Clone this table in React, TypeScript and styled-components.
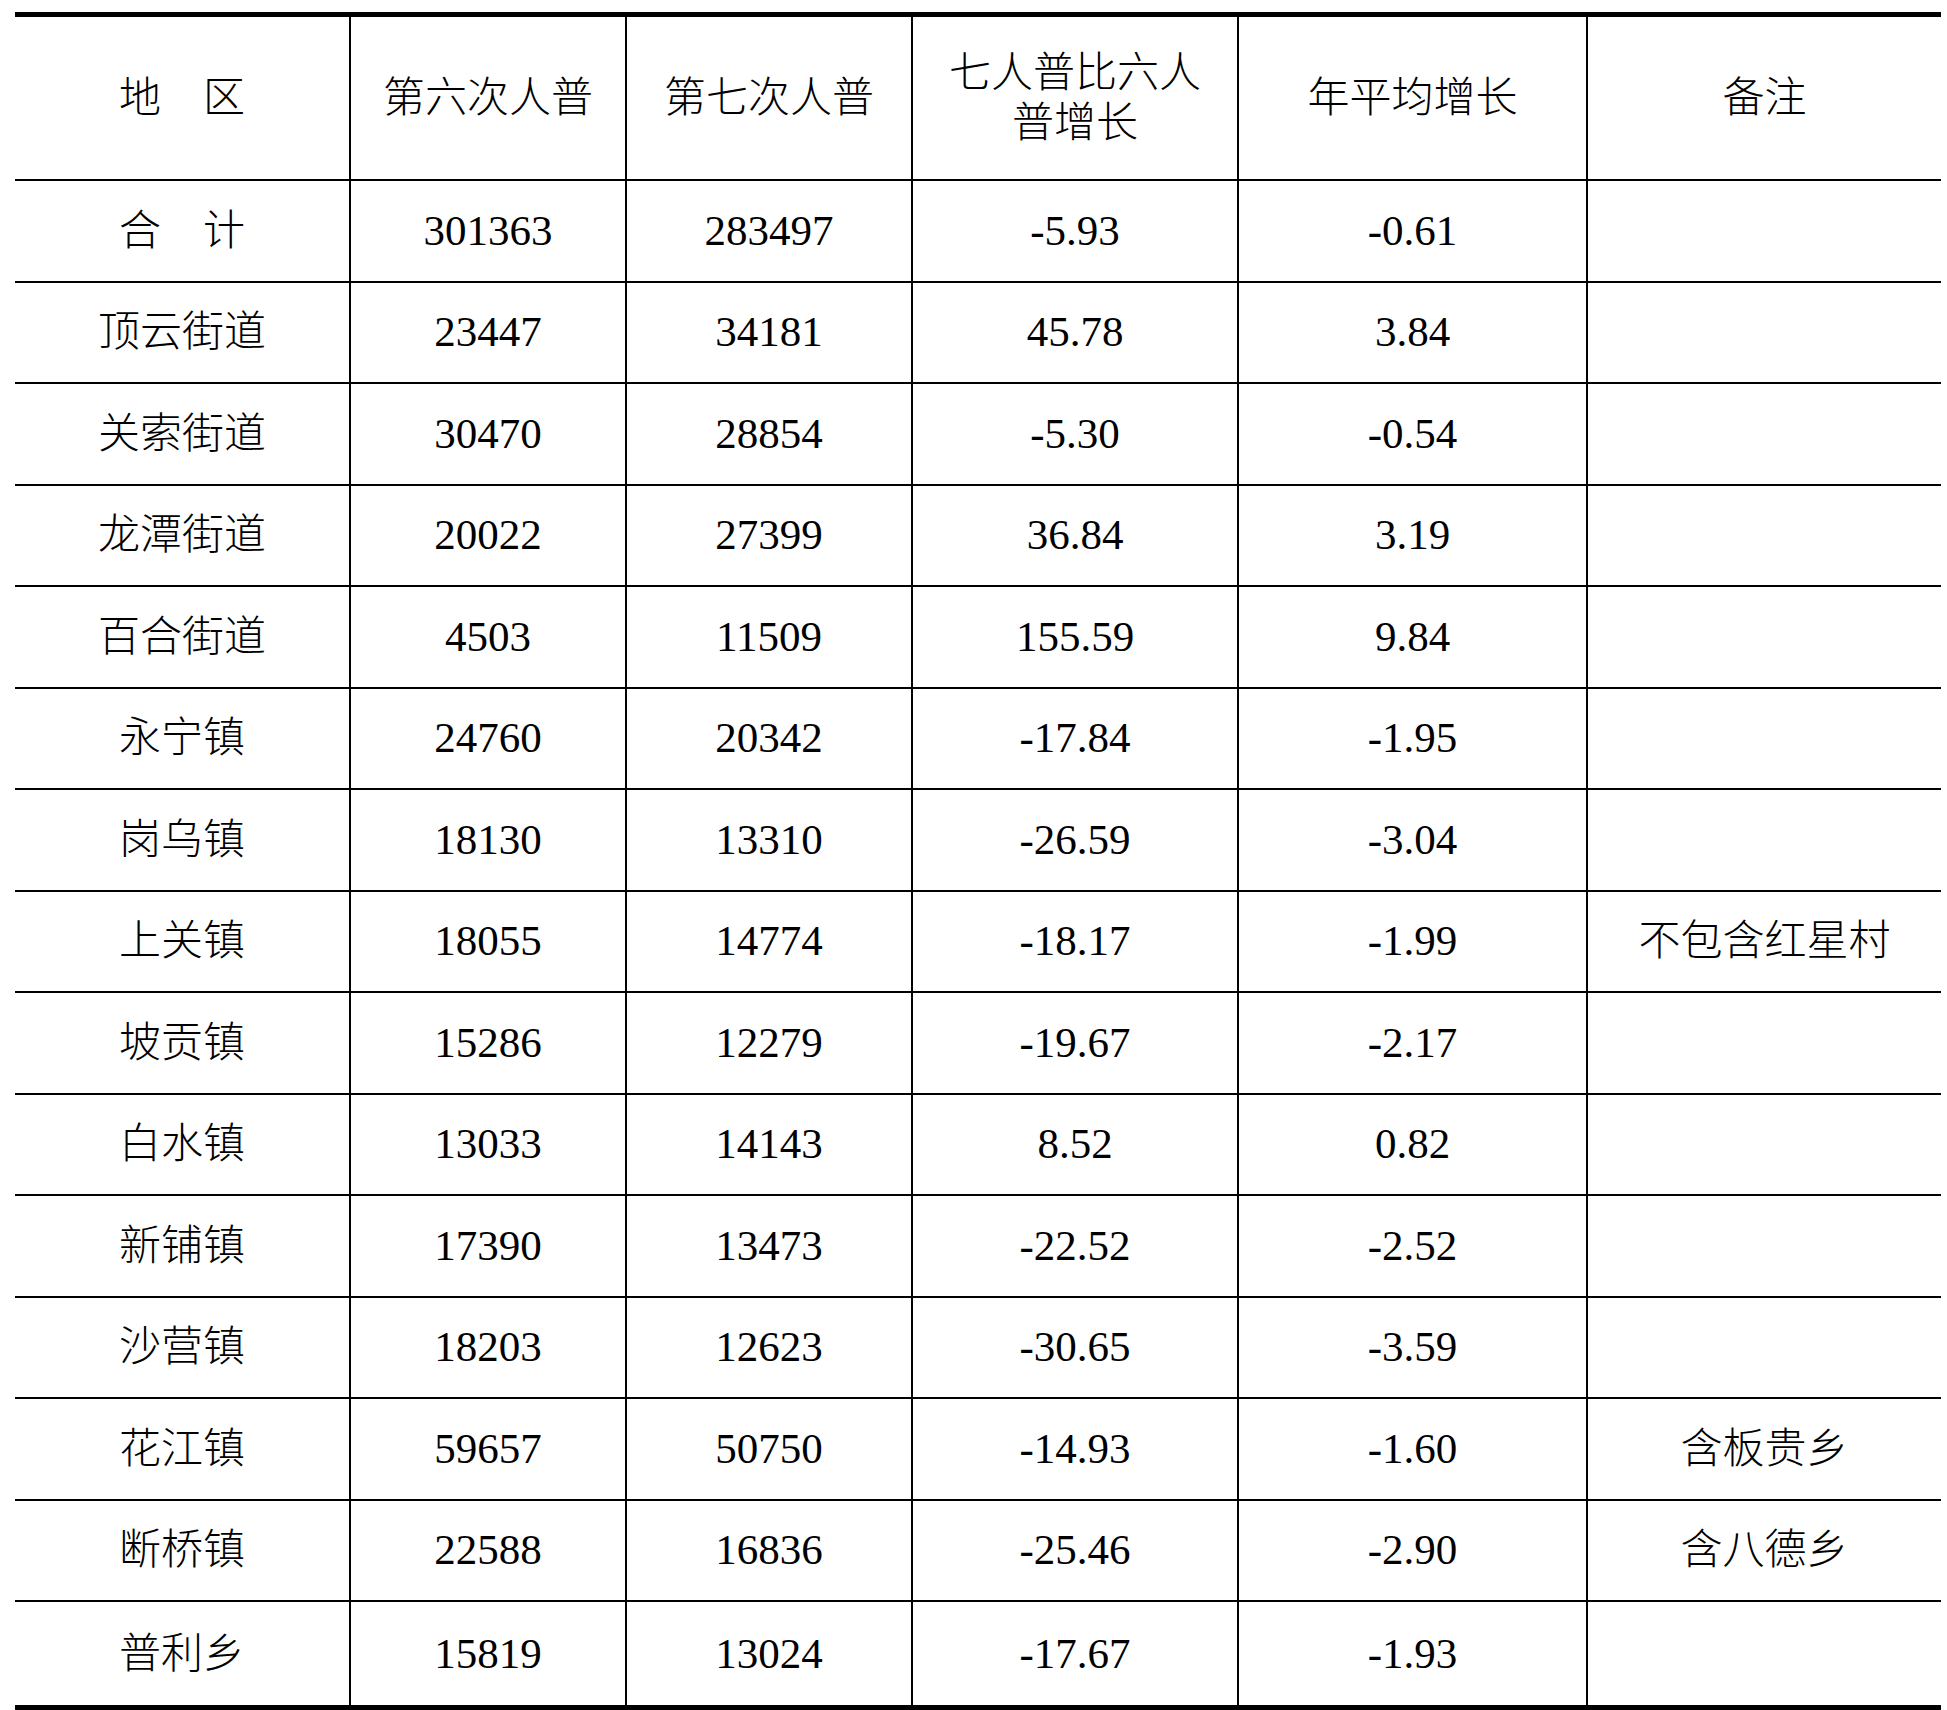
import styled, { createGlobalStyle } from "styled-components";

const GlobalStyle = createGlobalStyle`
    html, body {
        margin: 0;
        padding: 0;
        background: #ffffff;
        overflow: hidden;
    }
`;

type Region = {
    name: string;
    sixth: string;
    seventh: string;
    growth: string;
    yearly: string;
    note?: string;
};

const rows: Region[] = [
    { name: "合　计", sixth: "301363", seventh: "283497", growth: "-5.93", yearly: "-0.61" },
    { name: "顶云街道", sixth: "23447", seventh: "34181", growth: "45.78", yearly: "3.84" },
    { name: "关索街道", sixth: "30470", seventh: "28854", growth: "-5.30", yearly: "-0.54" },
    { name: "龙潭街道", sixth: "20022", seventh: "27399", growth: "36.84", yearly: "3.19" },
    { name: "百合街道", sixth: "4503", seventh: "11509", growth: "155.59", yearly: "9.84" },
    { name: "永宁镇", sixth: "24760", seventh: "20342", growth: "-17.84", yearly: "-1.95" },
    { name: "岗乌镇", sixth: "18130", seventh: "13310", growth: "-26.59", yearly: "-3.04" },
    { name: "上关镇", sixth: "18055", seventh: "14774", growth: "-18.17", yearly: "-1.99", note: "不包含红星村" },
    { name: "坡贡镇", sixth: "15286", seventh: "12279", growth: "-19.67", yearly: "-2.17" },
    { name: "白水镇", sixth: "13033", seventh: "14143", growth: "8.52", yearly: "0.82" },
    { name: "新铺镇", sixth: "17390", seventh: "13473", growth: "-22.52", yearly: "-2.52" },
    { name: "沙营镇", sixth: "18203", seventh: "12623", growth: "-30.65", yearly: "-3.59" },
    { name: "花江镇", sixth: "59657", seventh: "50750", growth: "-14.93", yearly: "-1.60", note: "含板贵乡" },
    { name: "断桥镇", sixth: "22588", seventh: "16836", growth: "-25.46", yearly: "-2.90", note: "含八德乡" },
    { name: "普利乡", sixth: "15819", seventh: "13024", growth: "-17.67", yearly: "-1.93" },
];

const App = () => {
    return (
        <>
            <GlobalStyle />
            <Page>
                <Table>
                    <Row $kind="head">
                        <Cell>地　区</Cell>
                        <Cell>第六次人普</Cell>
                        <Cell>第七次人普</Cell>
                        <Cell>
                            七人普比六人
                            <br />
                            普增长
                        </Cell>
                        <Cell>年平均增长</Cell>
                        <Cell>备注</Cell>
                    </Row>
                    {rows.map((r, i) => (
                        <Row key={r.name} $kind={i === rows.length - 1 ? "last" : "body"}>
                            <Cell>{r.name}</Cell>
                            <Cell $num>{r.sixth}</Cell>
                            <Cell $num>{r.seventh}</Cell>
                            <Cell $num>{r.growth}</Cell>
                            <Cell $num>{r.yearly}</Cell>
                            <Cell>{r.note ?? ""}</Cell>
                        </Row>
                    ))}
                </Table>
            </Page>
        </>
    );
};

const Page = styled.div`
    padding: 12px 0 0 15px;
`;

const Table = styled.div`
    width: 1926px;
    border-top: 5px solid #000;
    border-bottom: 5px solid #000;
    font-family: "Liberation Serif", "Noto Sans CJK SC", serif;
    font-size: 42px;
    font-weight: 300;
    color: #000;
`;

const heights = { head: 164, body: 101.5, last: 103 };

const Row = styled.div<{ $kind: "head" | "body" | "last" }>`
    display: grid;
    grid-template-columns: 336px 276px 286px 326px 349px 353px;
    box-sizing: border-box;
    height: ${(p) => heights[p.$kind]}px;
    border-bottom: ${(p) => (p.$kind === "last" ? "none" : "2px solid #000")};
    line-height: 50px;
`;

const Cell = styled.div<{ $num?: boolean }>`
    display: flex;
    justify-content: center;
    align-items: center;
    text-align: center;
    white-space: pre;
    box-sizing: border-box;
    border-right: 2px solid #000;
    font-size: ${(p) => (p.$num ? "43px" : "42px")};

    &:last-child {
        border-right: none;
    }
`;

export default App;
